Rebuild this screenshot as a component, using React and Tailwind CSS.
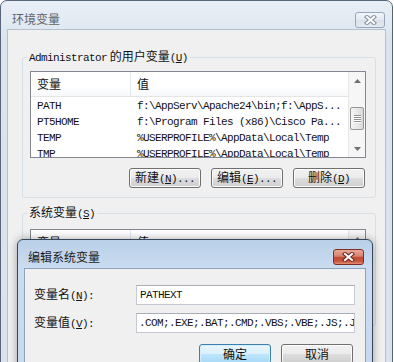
import React from "react";

const MONO = "font-['Liberation_Mono','DejaVu_Sans_Mono',monospace] text-[11px] tracking-[-0.6px]";

function M({ children }) {
  return <span className={MONO}>{children}</span>;
}

function XGlyph({ outline, fill }) {
  return (
    <svg width="13" height="10" viewBox="0 0 13 10">
      <path d="M3 2 L10 8 M10 2 L3 8" stroke={outline} strokeWidth="4.2" strokeLinecap="square" fill="none" />
      <path d="M3 2 L10 8 M10 2 L3 8" stroke={fill} strokeWidth="2" strokeLinecap="square" fill="none" />
    </svg>
  );
}

function Btn({ children, primary }) {
  return (
    <div
      className={
        primary
          ? "flex h-[20px] w-[72px] items-center justify-center rounded-[3px] border border-[#3c7fb1] bg-[linear-gradient(to_bottom,#eaf6fd_0%,#d9f0fc_50%,#bee6fd_50%,#a7d9f5_100%)] shadow-[inset_0_0_0_1px_#d6eefb]"
          : "flex h-[20px] w-[72px] items-center justify-center rounded-[3px] border border-[#707070] bg-[linear-gradient(to_bottom,#f2f2f2_0%,#ebebeb_50%,#dddddd_50%,#cfcfcf_100%)] shadow-[inset_0_0_0_1px_#fcfcfc]"
      }
    >
      <span className="whitespace-nowrap">{children}</span>
    </div>
  );
}

function Arrow({ down }) {
  return (
    <svg width="7" height="4" viewBox="0 0 7 4">
      <path d={down ? "M0 0 L7 0 L3.5 4 Z" : "M0 4 L3.5 0 L7 4 Z"} fill="#6f6f6f" />
    </svg>
  );
}

function ScrollBar({ thumb }) {
  return (
    <div className="flex w-[17px] flex-col border-l border-[#e6e6e6] bg-[#f6f6f6]">
      <div className="flex h-[17px] items-center justify-center">
        <Arrow />
      </div>
      <div className="flex-1">
        {thumb && (
          <div className="mx-[1px] mt-[18px] flex h-[23px] items-center justify-center rounded-[2px] border border-[#979797] bg-[linear-gradient(to_right,#f4f4f4,#e6e6e6_60%,#d8d8d8)]">
            <svg width="7" height="8" viewBox="0 0 7 8">
              <path d="M0 0.5 H7 M0 2.5 H7 M0 4.5 H7 M0 6.5 H7" stroke="#8f8f8f" strokeWidth="1" />
              <path d="M0 1.5 H7 M0 3.5 H7 M0 5.5 H7 M0 7.5 H7" stroke="#ffffff" strokeWidth="1" />
            </svg>
          </div>
        )}
      </div>
      <div className="flex h-[17px] items-center justify-center">
        <Arrow down />
      </div>
    </div>
  );
}

function ListView({ rows, heightClass }) {
  return (
    <div className={"flex border border-[#828790] bg-white " + heightClass}>
      <div className="flex min-w-0 flex-1 flex-col overflow-hidden">
        <div className="flex h-[25px] shrink-0 items-center border-b border-[#e5e5e5] bg-[linear-gradient(to_bottom,#ffffff_0%,#ffffff_60%,#f7f8fa_100%)]">
          <div className="flex h-full w-[100px] items-center border-r border-[#e3e8ee] pl-[6px]">变量</div>
          <div className="pl-[6px]">值</div>
        </div>
        {rows.map((r) => (
          <div key={r[0]} className="flex h-[16px] shrink-0 items-center whitespace-nowrap">
            <div className="w-[100px] shrink-0 pl-[6px]">
              <M>{r[0]}</M>
            </div>
            <div className="overflow-hidden pl-[6px]">
              <M>{r[1]}</M>
            </div>
          </div>
        ))}
      </div>
      <ScrollBar thumb />
    </div>
  );
}

export default function App() {
  const userRows = [
    ["PATH", "f:\\AppServ\\Apache24\\bin;f:\\AppS..."],
    ["PT5HOME", "f:\\Program Files (x86)\\Cisco Pa..."],
    ["TEMP", "%USERPROFILE%\\AppData\\Local\\Temp"],
    ["TMP", "%USERPROFILE%\\AppData\\Local\\Temp"],
  ];
  const sysRows = [
    ["ComSpec", "C:\\Windows\\system32\\cmd.exe"],
    ["NUMBER_OF_PR...", "4"],
    ["OS", "Windows_NT"],
  ];

  return (
    <div className="relative h-[362px] w-[394px] overflow-hidden bg-white font-['Noto_Sans_CJK_SC','Noto_Sans',sans-serif] text-[12px] leading-[14px] text-[#111]">
      {/* main window */}
      <div className="flex h-[420px] w-[393px] flex-col rounded-t-[7px] border border-[#56657a] bg-[linear-gradient(to_bottom,#e9eff6,#dbe4ee_40px,#d9e3ed)] px-[6px]">
        <div className="flex h-[28px] shrink-0 items-start justify-between">
          <div className="pl-[5px] pt-[11px] text-[#5f646b]">环境变量</div>
          <div className="mr-[1px] mt-[11px] flex h-[16px] w-[30px] items-center justify-center rounded-[3px] border border-[#98a6b8] bg-[linear-gradient(to_bottom,#f3f6fa,#e3e9f0_50%,#d9e1ea_50%,#e4eaf1)]">
            <XGlyph outline="#8a96a6" fill="#ffffff" />
          </div>
        </div>
        <div className="flex flex-1 flex-col border border-[#b4c0ce] bg-[#f0f0f0] pl-[14px] pr-[9px] pt-[19px]">
          {/* user variables */}
          <fieldset className="rounded-[3px] border border-[#d5dfe5] p-0">
            <legend className="ml-[4px] px-[2px] leading-[14px]">
              <M>Administrator</M> 的用户变量<M>(<u>U</u>)</M>
            </legend>
            <div className="pb-[9px] pl-[7px] pr-[9px] pt-[6px]">
              <ListView rows={userRows} heightClass="h-[87px]" />
              <div className="mr-[1px] mt-[10px] flex justify-end gap-[10px]">
                <Btn>
                  新建<M>(<u>N</u>)...</M>
                </Btn>
                <Btn>
                  编辑<M>(<u>E</u>)...</M>
                </Btn>
                <Btn>
                  删除<M>(<u>D</u>)</M>
                </Btn>
              </div>
            </div>
          </fieldset>
          {/* system variables */}
          <fieldset className="mt-[7px] rounded-[3px] border border-[#d5dfe5] p-0">
            <legend className="ml-[4px] px-[2px] leading-[14px]">
              系统变量<M>(<u>S</u>)</M>
            </legend>
            <div className="pb-[9px] pl-[7px] pr-[9px] pt-[8px]">
              <ListView rows={sysRows} heightClass="h-[87px]" />
            </div>
          </fieldset>
        </div>
      </div>

      {/* edit dialog */}
      <div className="absolute left-[17px] top-[239px] flex h-[150px] w-[356px] flex-col rounded-t-[6px] border border-[#33465c] bg-[linear-gradient(to_bottom,#b9cfe8,#cadcf0_28px,#c6d8ec)] shadow-[0_0_8px_rgba(0,0,0,0.35)]">
        <div className="flex h-[28px] shrink-0 items-start justify-between">
          <div className="pl-[10px] pt-[10px] text-[#1b1b1b]">编辑系统变量</div>
          <div className="mr-[8px] mt-[9px] flex h-[16px] w-[31px] items-center justify-center rounded-[3px] border border-[#7a2e26] bg-[linear-gradient(to_bottom,#eaa999_0%,#d8806c_45%,#c34a35_52%,#c9543e_80%,#e38f73_100%)]">
            <XGlyph outline="#6f2a22" fill="#ffffff" />
          </div>
        </div>
        <div className="mx-[6px] flex flex-1 flex-col border border-[#8ea3bb] bg-[#f0f0f0] pl-[9px] pr-[10px] pt-[16px]">
          <div className="flex h-[20px] items-center">
            <div className="w-[102px] shrink-0">
              变量名<M>(<u>N</u>):</M>
            </div>
            <div className="flex h-[20px] flex-1 items-center overflow-hidden whitespace-nowrap border border-[#c5c9d1] border-t-[#a9adb5] bg-white pl-[3px]">
              <M>PATHEXT</M>
            </div>
          </div>
          <div className="mt-[8px] flex h-[20px] items-center">
            <div className="w-[102px] shrink-0">
              变量值<M>(<u>V</u>):</M>
            </div>
            <div className="flex h-[20px] flex-1 items-center overflow-hidden whitespace-nowrap border border-[#c5c9d1] border-t-[#a9adb5] bg-white pl-[2px]">
              <M>.COM;.EXE;.BAT;.CMD;.VBS;.VBE;.JS;.JSE;.WSF;.WSH;.MSC</M>
            </div>
          </div>
          <div className="mr-[2px] mt-[11px] flex justify-end gap-[10px]">
            <Btn primary>确定</Btn>
            <Btn>取消</Btn>
          </div>
        </div>
      </div>
    </div>
  );
}
